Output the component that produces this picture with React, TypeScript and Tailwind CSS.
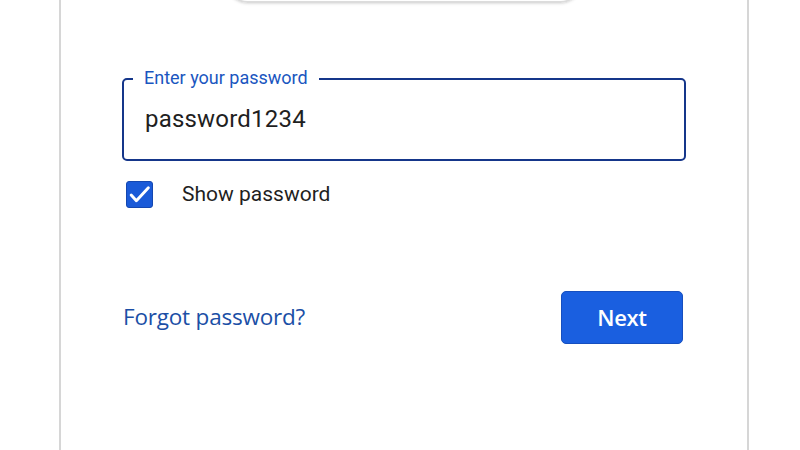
import React, { useState } from "react";

const App: React.FC = () => {
  const [password, setPassword] = useState("password1234");
  const [show, setShow] = useState(true);

  return (
    <div className="w-[800px] h-[450px] overflow-hidden bg-white flex font-['Roboto',sans-serif]">
      <div className="ml-[59px] w-[690px] h-full border-x-2 border-[#d6d6d6] flex flex-col px-[61px]">
        {/* top pill, mostly scrolled out of view */}
        <div className="-mt-[40px] ml-[104px] w-[356px] h-[43px] rounded-full border-2 border-[#dcdcdc] shadow-sm" />

        {/* password field */}
        <div className="relative mt-[75px] h-[83px] rounded-[5px] border-2 border-[#15368a] flex items-center pl-[21px]">
          <span className="absolute -top-[13px] left-[9px] bg-white px-[11px] text-[18px] leading-[22px] text-[#1a56c0]">
            Enter your password
          </span>
          <input
            type={show ? "text" : "password"}
            value={password}
            onChange={(e) => setPassword(e.target.value)}
            className="w-full bg-transparent outline-none text-[24px] text-[#1f1f1f] tracking-[0.2px] -mt-[2px]"
          />
        </div>

        {/* show password */}
        <label className="mt-[18px] flex items-center cursor-pointer">
          <span
            onClick={() => setShow(!show)}
            className="ml-[4px] w-[27px] h-[27px] rounded-[3px] bg-[#1a5ad8] border border-[#1447b0] flex items-center justify-center"
          >
            {show && (
              <svg viewBox="0 0 24 24" className="w-[25px] h-[25px]" fill="none" stroke="white" strokeWidth={2.8} strokeLinecap="round" strokeLinejoin="round">
                <path d="M4 12.5l5 5.5L20.5 5.5" />
              </svg>
            )}
          </span>
          <span className="ml-[29px] text-[21px] text-[#1f1f1f]">Show password</span>
        </label>

        {/* actions */}
        <div className="mt-[80px] flex items-center justify-between">
          <a href="#" className="text-[22.5px] text-[#1b4fa6] font-['Open_Sans',sans-serif] tracking-[-0.2px] ml-[1px]">
            Forgot password?
          </a>
          <button className="mr-[3px] w-[122px] h-[53px] rounded-[5px] bg-[#1a5fe0] border border-[#164fbf] text-white text-[22px] font-semibold font-['Open_Sans',sans-serif] tracking-[-0.3px]">
            Next
          </button>
        </div>
      </div>
    </div>
  );
};

export default App;
